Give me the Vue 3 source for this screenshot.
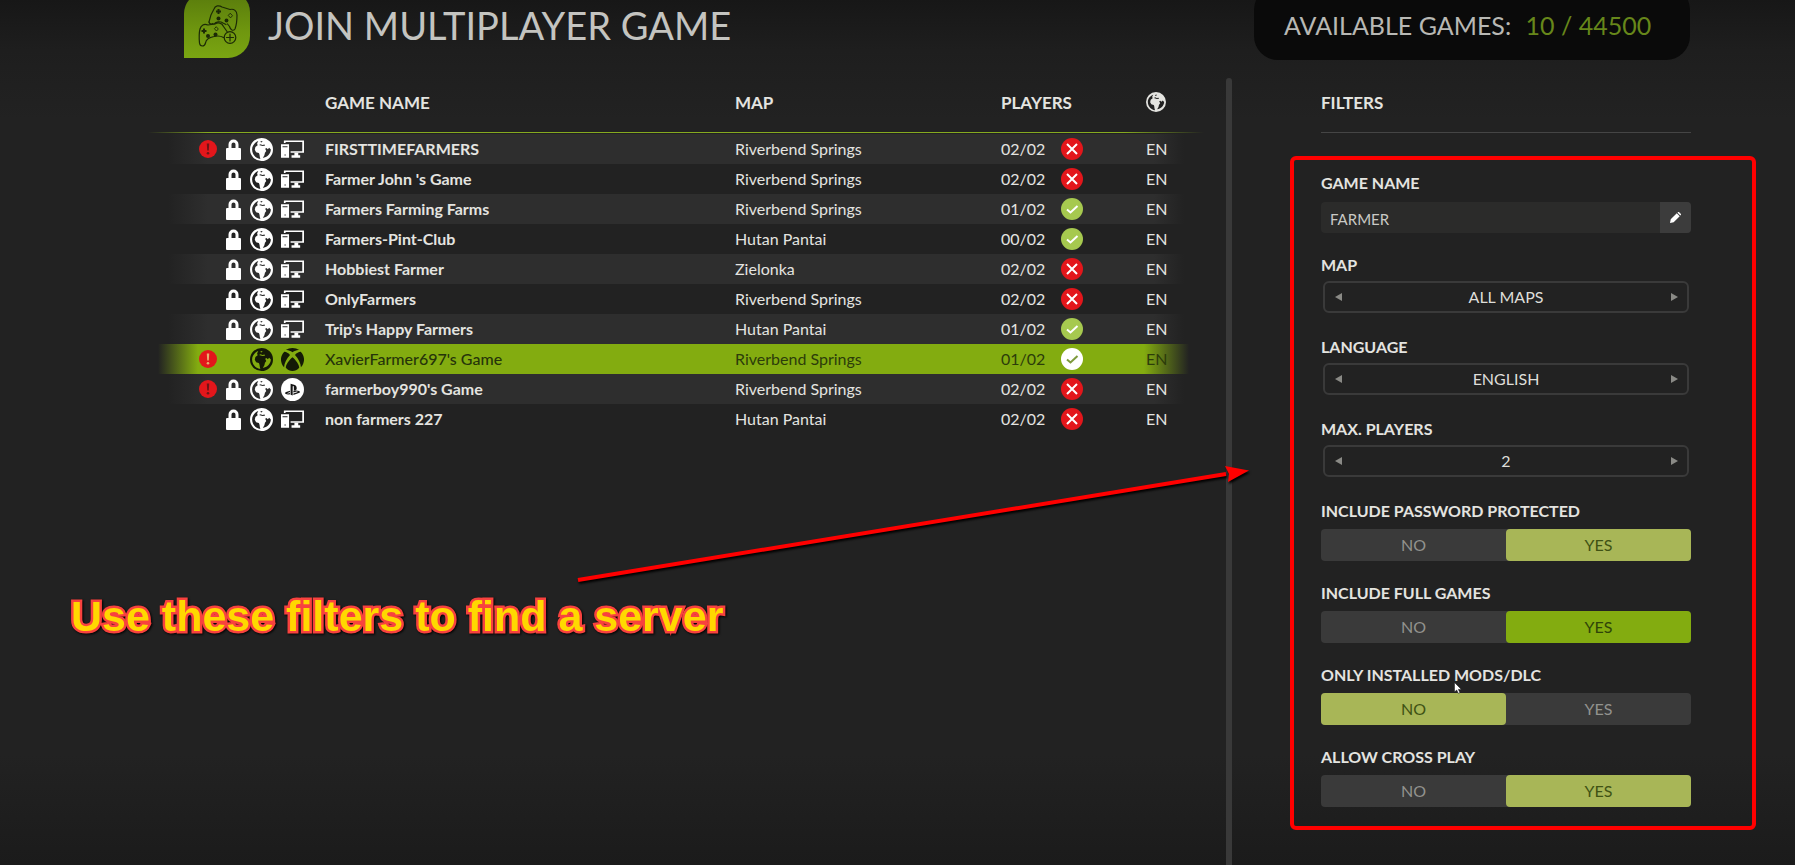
<template>
  <div class="screen">
    <svg class="symbols" aria-hidden="true">
      <symbol id="globe" viewBox="0 0 24 24">
        <path
          fill="currentColor"
          fill-rule="evenodd"
          d="M12 0a12 12 0 1 0 0 24a12 12 0 1 0 0-24z M8.600 3.200C5 4.600 2.200 8 2.200 12c0 5 3.800 9.400 8.600 9.800l-.6-2.200c-.2-1.400-.1-2.600-1-4l-2.800-.8-1.400-2.600.6-2.800 2.400-1.800-.6-1.800z M21.800 12l-1.800-1.800-1.400 1.600-1.400-1.400-1.400.8 1.200 2.400-1.400 1.800-.6 2.600-1.600 2.800c4.400-.8 8-4 8.400-8.800z M9.400 7.200l1.800-.8 1.600.8 2.400-.4.4 1.200-2.600.3-1.800-.5z M10.600 4l1.600-1 1 .6-1.400 1.200z"
        />
      </symbol>
      <symbol id="lock" viewBox="0 0 15 21">
        <path
          fill="currentColor"
          fill-rule="evenodd"
          d="M2.500 9V5.500a5 5 0 0 1 10 0V9H14a1 1 0 0 1 1 1v10a1 1 0 0 1-1 1H1a1 1 0 0 1-1-1V10a1 1 0 0 1 1-1z M5.500 9h4V5.500a2 2 0 0 0-4 0z"
        />
      </symbol>
      <symbol id="pc" viewBox="0 0 24 18">
        <path fill="currentColor" d="M3 0h21v13H10V11.400h12.200V1.800H4.800V2.800H3z" />
        <path fill="currentColor" d="M14 13h4v2.400h2V18h-9v-2.600h3z" />
        <path
          fill="currentColor"
          fill-rule="evenodd"
          d="M0 4h8.400v14H0z M1.600 6.200v1h5.200v-1z M3.600 14.800v1h1.400v-1z"
        />
      </symbol>
      <symbol id="xbox" viewBox="0 0 24 24">
        <path
          fill="currentColor"
          d="M5 2.200C9 -.6 15 -.6 19 2.200C17 1.700 14.500 2.800 12 4.400C9.500 2.800 7 1.700 5 2.200z M3.200 4.100C5 3.700 7.400 5.300 9.400 7.200C6 11 3.300 15.600 3.200 20.200C-1.200 15.400 -1 8.400 3.200 4.100z M20.800 4.100C25 8.400 25.200 15.400 20.800 20.200C20.700 15.600 18 11 14.600 7.200C16.600 5.300 19 3.700 20.800 4.100z M12 9.600C15.500 12.400 19.200 17.600 19 20.600C15 25.100 9 25.100 5 20.600C4.800 17.600 8.500 12.400 12 9.600z"
        />
      </symbol>
      <symbol id="playstation" viewBox="0 0 24 24">
        <circle cx="12" cy="12" r="12" fill="currentColor" />
        <g fill="#161616">
          <path d="M10 6l3.600 1.100c2 .7 2.800 1.700 2.800 3.700c0 1.900-1.300 2.700-3 1.900V9.300c0-.5-.2-.9-.6-1s-.6.200-.6.600v9.300L10 17.400z" />
          <path d="M9.400 13.200v1.500l-2.500.9c-.6.300-.3.700.4.600l2.100-.6v1.300c-2 .5-3.600.3-4.700-.4c-.9-.6-.6-1.500.6-2z" />
          <path d="M12.900 13.400c2.300-.7 4.400-.6 5.900.1c1.400.7 1.200 1.600-.2 2.200l-5.700 2v-1.500l4-1.400c.7-.3.400-.8-.5-.6l-3.500 1z" />
        </g>
      </symbol>
    </svg>

    <header class="top-bar">
      <svg class="logo" viewBox="0 0 66 66" aria-hidden="true">
        <defs>
          <linearGradient id="logo-fill" x1="0" y1="0" x2="0" y2="1">
            <stop offset="0" stop-color="#587a0c" />
            <stop offset="0.6" stop-color="#6f970f" />
            <stop offset="1" stop-color="#7aa512" />
          </linearGradient>
        </defs>
        <path d="M22 0H46A20 20 0 0 1 66 20V44A22 22 0 0 1 44 66H0V22A22 22 0 0 1 22 0z" fill="url(#logo-fill)" />
        <g fill="none" stroke="#1c2a06" stroke-width="1.200" stroke-linecap="round" stroke-linejoin="round">
          <path d="M25 30C26 25 28 20 30 17C31 13.500 35 13 38 15L46 17.500C50 16.500 53 19 53 23C53 28 52.500 33 51 37C49 39.500 46.500 38 45.500 34.500L43.500 32" />
          <path d="M25 30C25.500 32 27 32.500 29 31.500" />
          <path d="M39.500 45.500C37 44 34 43.500 30 44.500C25 45.500 22 47 21.500 51C20.500 55 16 55 15.500 51C15 46 15 41 16 37C17 33 20 31.500 24 33L31 32C34 30 38 31 39.500 34.500L43 39.500" />
          <path d="M30 32C32 29.500 36 29 39 31L42 32.500" />
          <circle cx="46" cy="45.500" r="5.800" />
          <path d="M46 42v7M42.500 45.500h7" />
          <path d="M46.500 21.500l2 2.200l-2 2.200l-2-2.200z M32.500 35l1.800 2l-1.800 2l-1.800-2z" stroke-width="0.900" />
        </g>
        <g fill="#1c2a06">
          <path d="M33.500 17h2v1.500H37v2h-1.500V22h-2v-1.500H32v-2h1.500z" />
          <path d="M19 36.500h2V38h1.500v2H21v1.500h-2V40h-1.500v-2H19z" />
          <circle cx="34.500" cy="26.500" r="2" />
          <circle cx="42.500" cy="28.500" r="1.900" />
          <circle cx="24" cy="44" r="2" />
          <circle cx="31.500" cy="42.500" r="2" />
        </g>
      </svg>
      <h1>JOIN MULTIPLAYER GAME</h1>
      <p class="available">
        AVAILABLE GAMES: <span>10 / 44500</span>
      </p>
    </header>

    <main class="content">
      <section class="games">
        <table>
          <colgroup>
            <col class="col-icons" />
            <col class="col-name" />
            <col class="col-map" />
            <col class="col-players" />
            <col class="col-status" />
            <col class="col-lang" />
          </colgroup>
          <thead>
            <tr>
              <th></th>
              <th>GAME NAME</th>
              <th>MAP</th>
              <th colspan="2">PLAYERS</th>
              <th class="lang-head">
                <svg aria-label="Language"><use href="#globe" /></svg>
              </th>
            </tr>
          </thead>
          <tbody>
            <tr
              v-for="game in games"
              :key="game.name"
              :class="{ selected: game.name === selected }"
              @click="selected = game.name"
            >
              <td>
                <div class="icons">
                  <svg v-if="game.warning" class="icon-warning" viewBox="0 0 18 18">
                    <circle cx="9" cy="9" r="9" fill="#e3161b" />
                    <path d="M7.800 3.500h2.400l-.4 7H8.200z" />
                    <circle cx="9" cy="13.200" r="1.300" />
                  </svg>
                  <svg v-if="game.locked" class="icon-lock"><use href="#lock" /></svg>
                  <svg class="icon-globe"><use href="#globe" /></svg>
                  <svg class="icon-platform" :class="game.platform"><use :href="'#' + game.platform" /></svg>
                </div>
              </td>
              <td class="name">{{ game.name }}</td>
              <td>{{ game.map }}</td>
              <td>{{ game.players }}</td>
              <td>
                <svg class="status" :class="isFull(game) ? 'full' : 'open'" viewBox="0 0 22 22">
                  <circle cx="11" cy="11" r="11" />
                  <path v-if="isFull(game)" d="M6 6l10 10M16 6L6 16" />
                  <path v-else d="M6 11.500l3.500 3L16.500 8" />
                </svg>
              </td>
              <td>EN</td>
            </tr>
          </tbody>
        </table>
      </section>

      <div class="divider"></div>

      <aside class="filters">
        <h2>FILTERS</h2>
        <form class="filter-form" @submit.prevent>
          <div class="field">
            <label for="game-name">GAME NAME</label>
            <div class="text-box">
              <input id="game-name" v-model="gameName" type="text" />
              <button type="button" aria-label="Edit">
                <svg viewBox="0 0 12 12">
                  <path d="M0 12l.8-4L7.400 1.400l3.200 3.200L4 11.200z M8.200.7l.4-.4a1 1 0 0 1 1.400 0L11.700 2a1 1 0 0 1 0 1.400l-.4.400z" />
                </svg>
              </button>
            </div>
          </div>

          <div v-for="picker in pickers" :key="picker.id" class="field">
            <label :for="picker.id">{{ picker.label }}</label>
            <div class="picker">
              <button type="button" aria-label="Previous" @click="step(picker, -1)">
                <svg viewBox="0 0 7 8"><path d="M7 0v8L0 4z" /></svg>
              </button>
              <select :id="picker.id" v-model="picker.value">
                <option v-for="option in picker.options" :key="option">{{ option }}</option>
              </select>
              <button type="button" aria-label="Next" @click="step(picker, 1)">
                <svg viewBox="0 0 7 8"><path d="M0 0v8l7-4z" /></svg>
              </button>
            </div>
          </div>

          <fieldset v-for="toggle in toggles" :key="toggle.id" class="field">
            <legend>{{ toggle.label }}</legend>
            <div class="toggle" :class="{ focused: toggle.focused }">
              <label v-for="option in ['NO', 'YES']" :key="option">
                <input v-model="toggle.value" type="radio" :name="toggle.id" :value="option" />
                <span>{{ option }}</span>
              </label>
            </div>
          </fieldset>
        </form>
      </aside>
    </main>

    <p class="note">Use these filters to find a server</p>
    <svg class="arrow" viewBox="0 0 680 125" aria-hidden="true">
      <path d="M8 120L656 14" stroke="#ff0000" stroke-width="4" />
      <path d="M655 6L679 10.500L658 22L659 14z" fill="#ff0000" />
    </svg>
    <svg class="cursor" viewBox="0 0 8 12" aria-hidden="true">
      <path d="M.5.500v9.500l2.200-2l1.600 3.400l1.600-.8L4.400 7.400h3z" fill="#fff" stroke="#111" stroke-width="0.500" />
    </svg>
  </div>
</template>

<script setup>
import { ref, reactive } from 'vue';

const games = [
  { name: 'FIRSTTIMEFARMERS', map: 'Riverbend Springs', players: '02/02', locked: true, platform: 'pc', warning: true },
  { name: "Farmer John 's Game", map: 'Riverbend Springs', players: '02/02', locked: true, platform: 'pc' },
  { name: 'Farmers Farming Farms', map: 'Riverbend Springs', players: '01/02', locked: true, platform: 'pc' },
  { name: 'Farmers-Pint-Club', map: 'Hutan Pantai', players: '00/02', locked: true, platform: 'pc' },
  { name: 'Hobbiest Farmer', map: 'Zielonka', players: '02/02', locked: true, platform: 'pc' },
  { name: 'OnlyFarmers', map: 'Riverbend Springs', players: '02/02', locked: true, platform: 'pc' },
  { name: "Trip's Happy Farmers", map: 'Hutan Pantai', players: '01/02', locked: true, platform: 'pc' },
  { name: "XavierFarmer697's Game", map: 'Riverbend Springs', players: '01/02', locked: false, platform: 'xbox', warning: true },
  { name: "farmerboy990's Game", map: 'Riverbend Springs', players: '02/02', locked: true, platform: 'playstation', warning: true },
  { name: 'non farmers 227', map: 'Hutan Pantai', players: '02/02', locked: true, platform: 'pc' }
];

const selected = ref("XavierFarmer697's Game");
const gameName = ref('FARMER');

const pickers = reactive([
  { id: 'map', label: 'MAP', value: 'ALL MAPS', options: ['ALL MAPS', 'RIVERBEND SPRINGS', 'HUTAN PANTAI', 'ZIELONKA'] },
  { id: 'language', label: 'LANGUAGE', value: 'ENGLISH', options: ['ENGLISH', 'DEUTSCH', 'FRANÇAIS'] },
  { id: 'max-players', label: 'MAX. PLAYERS', value: '2', options: ['2', '4', '8', '16'] }
]);

const toggles = reactive([
  { id: 'password', label: 'INCLUDE PASSWORD PROTECTED', value: 'YES' },
  { id: 'full', label: 'INCLUDE FULL GAMES', value: 'YES', focused: true },
  { id: 'mods', label: 'ONLY INSTALLED MODS/DLC', value: 'NO' },
  { id: 'crossplay', label: 'ALLOW CROSS PLAY', value: 'YES' }
]);

const isFull = (game) => {
  const [current, max] = game.players.split('/');
  return current === max;
};

const step = (picker, direction) => {
  const count = picker.options.length;
  const index = picker.options.indexOf(picker.value);
  picker.value = picker.options[(index + direction + count) % count];
};
</script>

<style>
body {
  background: #222222;
}
</style>

<style scoped>
.screen {
  position: relative;
  display: flex;
  flex-direction: column;
  min-height: 100vh;
  box-sizing: border-box;
  overflow: hidden;
  background: linear-gradient(to bottom, #171717 0, #1e1e1e 50px, #222222 120px, #222222 calc(100% - 110px), #1b1b1b 100%);
  color: #e4e4e0;
  font-family: Lato, 'Open Sans', sans-serif;
  font-size: 16px;
}

.symbols {
  position: absolute;
  width: 0;
  height: 0;
}

.top-bar {
  display: flex;
  align-items: flex-start;
  height: 60px;
  padding: 0 105px 0 184px;
}

.logo {
  flex: none;
  width: 66px;
  height: 66px;
  margin: -8px 18px 0 0;
}

h1 {
  flex: 1;
  margin: 0;
  color: #c4c4c0;
  font-size: 38px;
  font-weight: 400;
  line-height: 50px;
  white-space: nowrap;
}

.available {
  box-sizing: border-box;
  width: 436px;
  height: 74px;
  margin: -14px 0 0;
  padding: 14px 30px 0;
  border-radius: 24px;
  background: #0a0a0a;
  color: #b8b8b4;
  font-size: 25px;
  line-height: 50px;
  white-space: nowrap;
}

.available span {
  margin-left: 8px;
  color: #67871a;
}

.content {
  display: grid;
  flex: 1;
  grid-template-columns: minmax(0, 1226fr) 6px minmax(0, 563fr);
  margin-top: 18px;
}

.games {
  padding: 0 22px 0 148px;
}

.divider {
  border-radius: 3px 3px 0 0;
  background: #393939;
}

table {
  width: 100%;
  border-collapse: collapse;
  table-layout: fixed;
}

.col-icons {
  width: 177px;
}

.col-name {
  width: auto;
}

.col-map {
  width: 266px;
}

.col-players {
  width: 60px;
}

.col-status {
  width: 85px;
}

.col-lang {
  width: 58px;
}

th {
  height: 48px;
  padding: 0 0 8px;
  font-size: 17px;
  font-weight: 700;
  text-align: left;
}

thead tr {
  background: linear-gradient(to right, transparent, #86aa20 60px, #86aa20 calc(100% - 80px), transparent) 0 54px / 100% 1px no-repeat;
}

.lang-head svg {
  display: block;
  width: 20px;
  height: 20px;
}

td {
  height: 30px;
  padding: 0;
  line-height: 30px;
}

tbody tr:nth-child(odd) {
  background: linear-gradient(to right, transparent 20px, #2e2e2e 60px, #2e2e2e calc(100% - 50px), transparent calc(100% - 20px));
}

tbody tr.selected {
  background: linear-gradient(to right, transparent 10px, #83ac10 50px, #83ac10 calc(100% - 60px), transparent calc(100% - 15px));
  color: #2c3c0a;
}

.name {
  font-weight: 700;
}

.selected .name {
  color: #26340a;
  font-weight: 500;
}

.icons {
  display: grid;
  grid-template-columns: 18px 17px 23px 23px;
  column-gap: 8px;
  align-items: center;
  height: 30px;
  padding-left: 51px;
  color: #ffffff;
}

.icons svg {
  display: block;
  width: 100%;
}

.icon-warning {
  grid-column: 1;
  grid-row: 1;
  height: 18px;
  fill: #6f1416;
}

.icon-lock {
  grid-column: 2;
  grid-row: 1;
  height: 21px;
}

.icon-globe {
  grid-column: 3;
  grid-row: 1;
  height: 23px;
}

.icon-platform {
  grid-column: 4;
  grid-row: 1;
  height: 23px;
}

.icon-platform.pc {
  height: 18px;
}

.selected .icons {
  color: #141a06;
}

.selected .icon-warning {
  fill: #e8b070;
}

.status {
  display: block;
  width: 22px;
  height: 22px;
  fill: none;
  stroke: #ffffff;
  stroke-width: 2;
}

.status circle {
  stroke: none;
}

.status.full circle {
  fill: #e3161b;
}

.status.open circle {
  fill: #a6c94f;
}

.selected .status.open {
  stroke: #7d9a3c;
}

.selected .status.open circle {
  fill: #ffffff;
}

.filters {
  padding: 0 39px 35px 58px;
}

h2 {
  box-sizing: border-box;
  height: 55px;
  margin: 0 65px 23px 31px;
  border-bottom: 1px solid #454545;
  font-size: 17px;
  font-weight: 700;
  line-height: 49px;
}

.filter-form {
  display: grid;
  grid-auto-rows: minmax(61px, auto);
  gap: 21px;
  padding: 12px 61px 19px 27px;
  border: 4px solid #ff0000;
  border-radius: 6px;
}

.field {
  min-width: 0;
  margin: 0;
  padding: 0;
  border: 0;
}

.field > label,
legend {
  display: block;
  padding: 0;
  font-size: 16px;
  font-weight: 700;
  line-height: 22px;
}

.text-box {
  display: flex;
  height: 31px;
  margin-top: 8px;
  border-radius: 4px;
  overflow: hidden;
  background: #2b2b2a;
}

.text-box input {
  flex: 1;
  min-width: 0;
  padding: 2px 9px 0;
  border: 0;
  background: transparent;
  color: #c9c9c5;
  font: inherit;
  font-size: 15px;
  outline: none;
}

.text-box button {
  display: grid;
  place-items: center;
  width: 31px;
  padding: 0;
  border: 0;
  background: #3c3c3c;
}

.text-box svg {
  width: 11px;
  height: 11px;
  fill: #ffffff;
}

.picker {
  display: flex;
  box-sizing: border-box;
  height: 32px;
  margin: 5px 2px 0;
  border: 2px solid #3a3a3a;
  border-radius: 6px;
}

.picker select {
  flex: 1;
  min-width: 0;
  padding: 0 0 2px;
  border: 0;
  appearance: none;
  background: transparent;
  color: #deded9;
  font: inherit;
  text-align: center;
  text-align-last: center;
  outline: none;
}

.picker option {
  background: #222222;
}

.picker button {
  display: grid;
  place-items: center;
  width: 26px;
  padding: 0;
  border: 0;
  background: transparent;
}

.picker svg {
  width: 7px;
  height: 8px;
  fill: #8a8a86;
}

.toggle {
  display: grid;
  grid-template-columns: 1fr 1fr;
  height: 32px;
  margin-top: 7px;
  border-radius: 4px;
  background: #3a3a3a;
}

.toggle input {
  position: absolute;
  opacity: 0;
}

.toggle span {
  display: block;
  border-radius: 4px;
  color: #92928e;
  line-height: 32px;
  text-align: center;
}

.toggle input:checked + span {
  background: #a8b657;
  color: #3f5214;
}

.toggle.focused input:checked + span {
  background: #83ac10;
  color: #2f4408;
}

.note {
  position: absolute;
  top: 591px;
  left: 71px;
  margin: 0;
  color: #ffd800;
  font-family: 'Liberation Sans', Arial, sans-serif;
  font-size: 43px;
  font-weight: 700;
  line-height: 50px;
  white-space: nowrap;
  -webkit-text-stroke: 5px #f8423e;
  paint-order: stroke fill;
  filter: drop-shadow(1px 1px 1px #000000);
}

.arrow {
  position: absolute;
  top: 460px;
  left: 570px;
  width: 680px;
  height: 125px;
  filter: drop-shadow(1px 2px 1px #000000);
  pointer-events: none;
}

.cursor {
  position: absolute;
  top: 682px;
  left: 1454px;
  width: 8px;
  height: 12px;
  pointer-events: none;
}
</style>
